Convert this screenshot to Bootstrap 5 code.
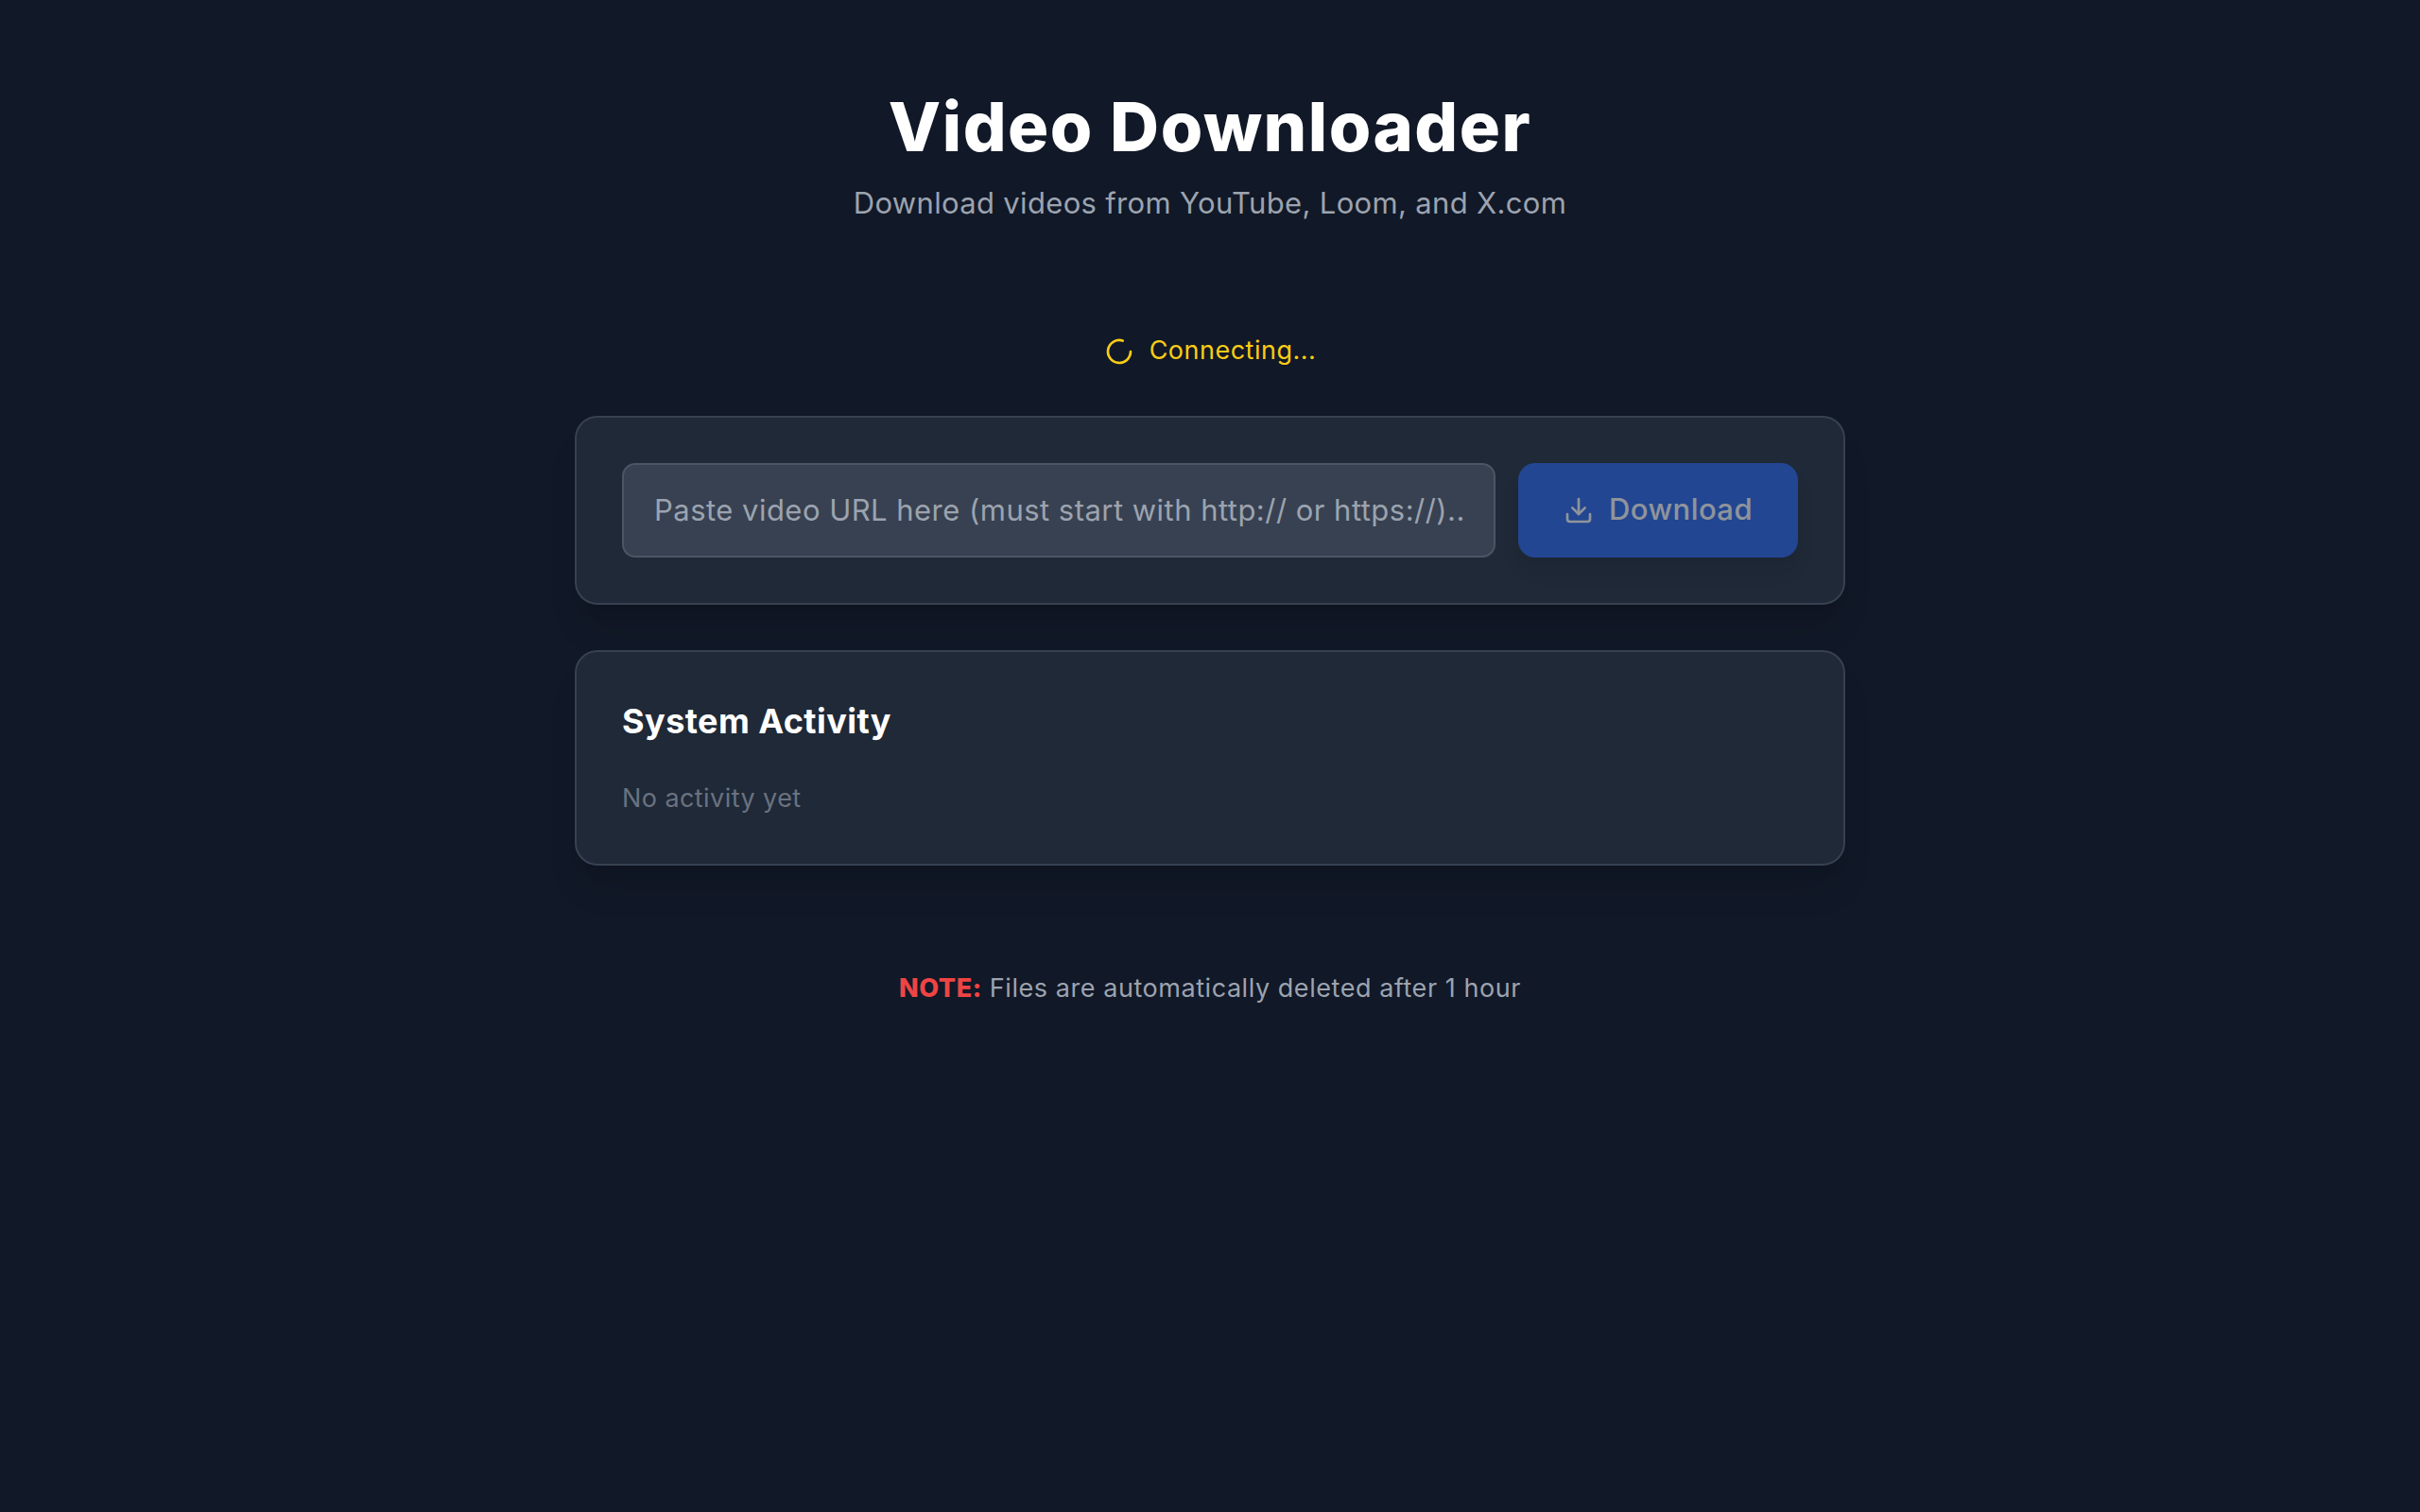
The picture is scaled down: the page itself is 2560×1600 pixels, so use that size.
<!DOCTYPE html>
<html lang="en">
<head>
<meta charset="utf-8">
<title>Video Downloader</title>
<link href="https://cdn.jsdelivr.net/npm/bootstrap@5.3.0/dist/css/bootstrap.min.css" rel="stylesheet">
<style>
body { background:#111827; font-family:"Inter","Liberation Sans",sans-serif; color:#fff; min-height:1600px; }
.page-wrap { width:1344px; padding-top:98px; }
.app-title { font-size:72px; line-height:72px; font-weight:800; letter-spacing:1.5px; color:#fff; margin:0 0 22px; }
.app-sub { font-size:31px; line-height:45px; letter-spacing:.33px; color:#9ca3af; margin:0; }
.conn-row { margin-top:117px; margin-bottom:50px; height:36px; font-size:27px; line-height:36px; letter-spacing:.5px; color:#facc15; gap:16px; }
.conn-row svg { width:32px; height:32px; }
.conn-row span { margin-bottom:3px; }
.panel-box { background:#1f2937; border:2px solid #374151; border-radius:24px; padding:48px; box-shadow:0 30px 38px -8px rgba(0,0,0,.1),0 12px 15px -9px rgba(0,0,0,.1); }
.url-input.form-control { height:100px; padding:0 32px 2px; font-size:31px; line-height:45px; letter-spacing:.47px; background:#374151; border:2px solid #4b5563; border-radius:14px; color:#fff; box-shadow:none; }
.url-input.form-control::placeholder { color:#9ca3af; opacity:1; }
.dl-btn.btn, .dl-btn.btn:disabled { height:100px; padding:0 48px; gap:16px; font-size:31px; line-height:45px; letter-spacing:.43px; font-weight:500; background:#2563eb; border:0; border-radius:18px; color:#fff; opacity:.5; box-shadow:0 15px 22px -4px rgba(0,0,0,.1),0 6px 9px -6px rgba(0,0,0,.1); }
.dl-btn svg { width:32px; height:32px; }
.dl-btn span { margin-bottom:3px; }
.activity-head { font-size:36px; line-height:50px; font-weight:700; letter-spacing:.45px; color:#fff; margin:0 0 36px; }
.activity-empty { font-size:27px; line-height:42px; letter-spacing:.43px; color:#6b7280; margin:0; }
.note-line { font-size:27px; line-height:39px; letter-spacing:.55px; color:#9ca3af; margin:110px 0 0; }
.note-line strong { color:#ef4444; font-weight:800; }
</style>
</head>
<body>
<main class="page-wrap mx-auto">
  <header class="text-center">
    <h1 class="app-title">Video Downloader</h1>
    <p class="app-sub">Download videos from YouTube, Loom, and X.com</p>
  </header>
  <div class="conn-row d-flex justify-content-center align-items-center">
    <svg viewBox="0 0 24 24" fill="none" stroke="currentColor" stroke-width="2" stroke-linecap="round" stroke-linejoin="round"><path d="M21 12a9 9 0 1 1-6.219-8.56"/></svg>
    <span>Connecting...</span>
  </div>
  <section class="panel-box d-flex gap-4 mb-5">
    <input class="url-input form-control flex-grow-1" type="text" placeholder="Paste video URL here (must start with http:// or https://)...">
    <button class="dl-btn btn d-flex align-items-center flex-shrink-0" type="button" disabled>
      <svg viewBox="0 0 24 24" fill="none" stroke="currentColor" stroke-width="2" stroke-linecap="round" stroke-linejoin="round"><path d="M21 15v4a2 2 0 0 1-2 2H5a2 2 0 0 1-2-2v-4"/><polyline points="7 10 12 15 17 10"/><line x1="12" y1="15" x2="12" y2="3"/></svg>
      <span>Download</span>
    </button>
  </section>
  <section class="panel-box">
    <h2 class="activity-head">System Activity</h2>
    <p class="activity-empty">No activity yet</p>
  </section>
  <p class="note-line text-center"><strong>NOTE:</strong> Files are automatically deleted after 1 hour</p>
</main>
</body>
</html>
